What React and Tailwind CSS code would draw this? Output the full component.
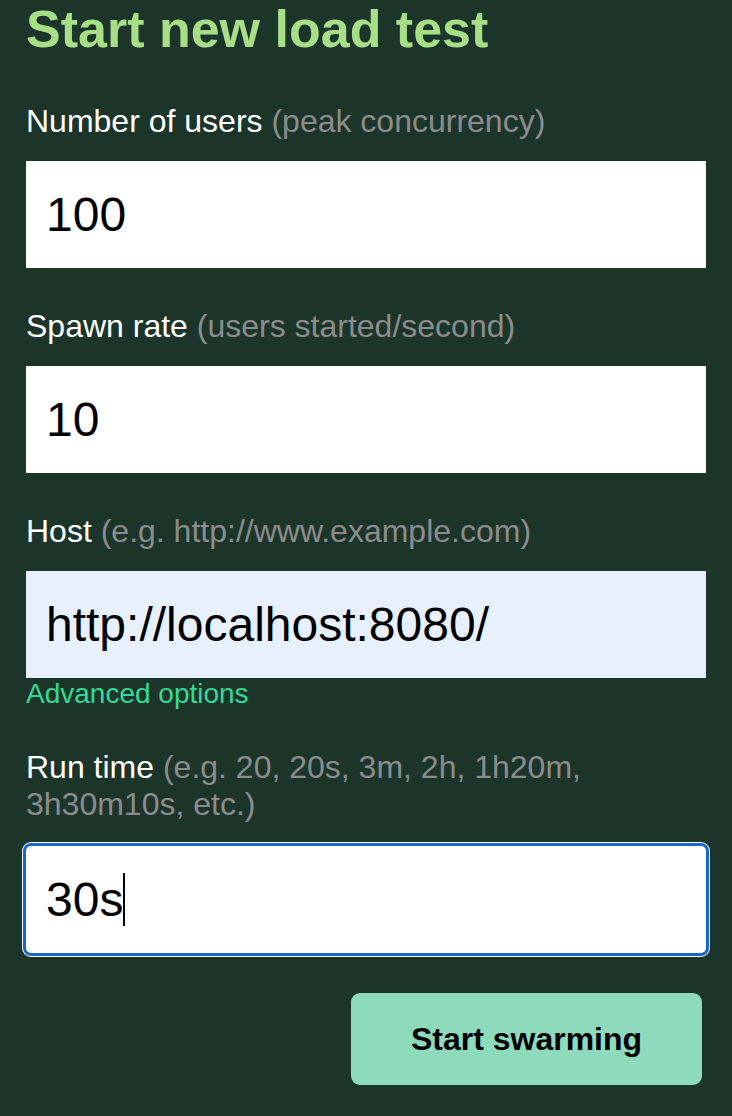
import React from "react";

//폼 필드 (라벨 + 입력)
const Field = ({ label, hint, value, bg = "bg-white" }) => {
  return (
    <div className="flex flex-col">
      <label className="text-[32px] leading-[37px] text-white">
        {label} <span className="text-[#8c8c8c]">{hint}</span>
      </label>
      <input
        type="text"
        defaultValue={value}
        readOnly
        className={`mt-[21px] h-[107px] w-full ${bg} pl-[20px] pr-[18px] text-[48px] text-black outline-none`}
      />
    </div>
  );
};

const App = () => {
  return (
    <div className="min-h-screen bg-[#1b352b] px-[26px] font-['Liberation_Sans',Arial,sans-serif]">
      {/* 제목 */}
      <h2 className="text-[52px] font-bold leading-[58px] text-[#a8de86]">Start new load test</h2>

      <form className="mt-[45px] flex flex-col" onSubmit={(e) => e.preventDefault()}>
        <Field label="Number of users" hint="(peak concurrency)" value="100" />

        <div className="mt-10">
          <Field label="Spawn rate" hint="(users started/second)" value="10" />
        </div>

        <div className="mt-10">
          <Field label="Host" hint="(e.g. http://www.example.com)" value="http://localhost:8080/" bg="bg-[#e8f0fe]" />
        </div>

        {/* 고급 옵션 */}
        <a className="text-[28px] leading-[32px] text-[#35d996]">Advanced options</a>

        {/* 실행 시간 (포커스 상태) */}
        <div className="mt-[39px] flex flex-col">
          <label className="max-w-[620px] text-[32px] leading-[37px] text-white">
            Run time <span className="text-[#8c8c8c]">(e.g. 20, 20s, 3m, 2h, 1h20m, 3h30m10s, etc.)</span>
          </label>
          <div className="mt-[23px] flex h-[107px] w-full items-center rounded-[5px] bg-white pl-[20px] pr-[18px] text-[48px] text-black shadow-[0_0_0_4px_#ffffff] ring-[3px] ring-[#1767cf]">
            <span>30s</span>
            <span className="h-[53px] w-[2px] bg-black" />
          </div>
        </div>

        {/* 시작 버튼 */}
        <div className="mt-10 flex justify-end pr-[4px]">
          <button
            type="submit"
            className="h-[92px] w-[351px] rounded-[9px] bg-[#8ddbbc] text-[32px] font-bold text-black"
          >
            Start swarming
          </button>
        </div>
      </form>
    </div>
  );
};

export default App;
